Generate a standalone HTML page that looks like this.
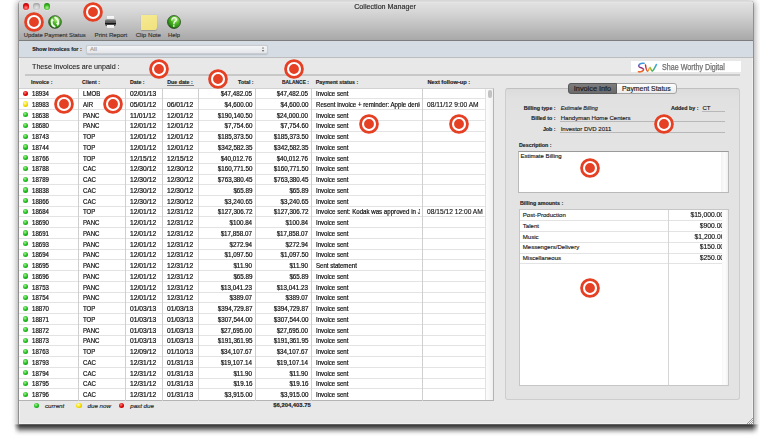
<!DOCTYPE html>
<html><head><meta charset="utf-8"><style>
html,body{margin:0;padding:0;width:760px;height:436px;overflow:hidden;background:#fff;}
body{position:relative;font-family:"Liberation Sans",sans-serif;}
.t{position:absolute;white-space:nowrap;-webkit-text-stroke-width:0.15px;}
.b{position:absolute;box-sizing:border-box;}
</style></head><body>

<div class="b" style="left:14px;top:424px;width:745px;height:12px;background:linear-gradient(rgba(0,0,0,0.45) 0.5px,rgba(0,0,0,0.66) 1.5px,rgba(0,0,0,0.6) 2.5px,rgba(0,0,0,0.52) 3.5px,rgba(0,0,0,0.435) 4.5px,rgba(0,0,0,0.34) 5.5px,rgba(0,0,0,0.247) 6.5px,rgba(0,0,0,0.169) 7.5px,rgba(0,0,0,0.106) 8.5px,rgba(0,0,0,0.059) 9.5px,rgba(0,0,0,0.027) 10.5px,rgba(0,0,0,0.01) 11.5px);-webkit-mask-image:linear-gradient(90deg,transparent 0,#000 6px,#000 738px,transparent 745px);"></div>
<div class="b" style="left:18.50px;top:1.00px;width:734.50px;height:423.00px;background:#e8e8e8;border-radius:3px 3px 0 0;box-shadow:-0.5px 0 0 rgba(0,0,0,0.5), 0.5px 0 0 rgba(0,0,0,0.5), 0 2px 6px 1.5px rgba(0,0,0,0.36), inset 1px 0 0 #f3f3f3, inset 0 -1px 0 #f2f2f2, inset -1px 0 0 #f0f0f0;"></div>
<div class="b" style="left:18.50px;top:1.00px;width:734.50px;height:40.00px;background:linear-gradient(#d9d9d9 0px,#e4e4e4 1.5px,#e0e0e0 2.5px,#d6d6d6 11px,#c0c0c0 25px,#a8a8a8 39px);border-radius:3px 3px 0 0;border-bottom:1px solid #7d7d7d;"></div>
<div class="b" style="left:18.50px;top:41.00px;width:734.50px;height:17.00px;background:#d5dce3;border-bottom:1px solid #bcbcbc;"></div>
<div class="b" style="left:23.00px;top:3.30px;width:6.40px;height:6.40px;border-radius:50%;background:radial-gradient(circle at 50% 68%,#ff9090 0,#e81010 48%,#900000 100%);box-shadow:0 0.5px 0.5px rgba(255,255,255,0.6);"></div>
<div class="b" style="left:33.40px;top:3.30px;width:6.40px;height:6.40px;border-radius:50%;background:radial-gradient(circle at 50% 68%,#e6e6e6 0,#c4c4c4 48%,#808080 100%);box-shadow:0 0.5px 0.5px rgba(255,255,255,0.6);"></div>
<div class="b" style="left:43.60px;top:3.30px;width:6.40px;height:6.40px;border-radius:50%;background:radial-gradient(circle at 50% 68%,#b8f0a0 0,#38b81c 48%,#186a0a 100%);box-shadow:0 0.5px 0.5px rgba(255,255,255,0.6);"></div>
<div class="t" style="left:185.30px;width:400px;text-align:center;top:2.00px;height:10px;line-height:10px;font-size:6.7px;font-weight:normal;font-style:normal;color:#2b2b2b;transform:scaleX(1.07);transform-origin:50% 50%;">Collection Manager</div>
<div class="t" style="left:23.80px;top:29.70px;height:10px;line-height:10px;font-size:5.87px;font-weight:normal;font-style:normal;color:#333;">Update Payment Status</div>
<div class="t" style="left:94.60px;top:29.60px;height:10px;line-height:10px;font-size:6.13px;font-weight:normal;font-style:normal;color:#333;">Print Report</div>
<div class="t" style="left:135.70px;top:29.60px;height:10px;line-height:10px;font-size:6.15px;font-weight:normal;font-style:normal;color:#333;">Clip Note</div>
<div class="t" style="left:168.00px;top:29.60px;height:10px;line-height:10px;font-size:5.8px;font-weight:normal;font-style:normal;color:#333;">Help</div>
<svg style="position:absolute;left:47.85px;top:15.35px" width="14" height="14" viewBox="0 0 14 14">
<defs><radialGradient id="gg" cx="0.62" cy="0.3" r="0.75"><stop offset="0" stop-color="#c4f48a"/><stop offset="0.4" stop-color="#52bc2a"/><stop offset="0.8" stop-color="#2a8c12"/><stop offset="1" stop-color="#185010"/></radialGradient></defs>
<circle cx="7" cy="7" r="6.35" fill="url(#gg)" stroke="#243d1c" stroke-width="0.7"/>
<path d="M6.6 11.6 C4.2 10.6 3.4 8.2 3.9 5.6" stroke="#eef8e8" stroke-width="1.9" fill="none" stroke-linecap="round"/>
<path d="M2.3 6.4 L4.1 3.0 L5.9 6.0 Z" fill="#eef8e8"/>
<path d="M7.2 2.6 C9.6 3.6 10.5 6.0 10.0 8.6" stroke="#eef8e8" stroke-width="1.9" fill="none" stroke-linecap="round"/>
<path d="M8.0 8.0 L9.8 11.2 L11.6 7.8 Z" fill="#eef8e8"/>
</svg>
<div class="b" style="left:107.30px;top:15.80px;width:6.80px;height:4.20px;background:linear-gradient(#fafafa,#e6e6e6);box-shadow:0 0 0.5px rgba(0,0,0,0.5);"></div>
<div class="b" style="left:104.60px;top:19.30px;width:11.80px;height:7.10px;background:linear-gradient(#a8a8a8 0,#6a6a6a 25%,#505050 60%,#3a3a3a 100%);border-radius:2px;"></div>
<div class="b" style="left:105.20px;top:22.90px;width:10.60px;height:1.20px;background:#141414;"></div>
<div class="b" style="left:107.30px;top:25.00px;width:6.80px;height:3.00px;background:linear-gradient(#f8f8f8,#e8e8e8);"></div>
<div class="b" style="left:140.50px;top:14.50px;width:16.10px;height:15.70px;background:linear-gradient(160deg,#f6ea92,#f1e27e);box-shadow:0 0.5px 1px rgba(0,0,0,0.2);border-bottom-right-radius:2px 4px;"></div>
<svg style="position:absolute;left:167.2px;top:14.9px" width="14" height="14" viewBox="0 0 14 14">
<defs><radialGradient id="gh" cx="0.62" cy="0.3" r="0.75"><stop offset="0" stop-color="#c4f48a"/><stop offset="0.4" stop-color="#52bc2a"/><stop offset="0.8" stop-color="#2a8c12"/><stop offset="1" stop-color="#185010"/></radialGradient></defs>
<circle cx="7" cy="7" r="6.5" fill="url(#gh)" stroke="#243d1c" stroke-width="0.7"/>
<path d="M4.9 5.0 C4.9 3.3 6.0 2.7 7.2 2.7 C8.6 2.7 9.5 3.6 9.3 4.8 C9.1 6.0 7.6 6.4 7.1 7.6 L6.9 8.9" stroke="#f0f8ec" stroke-width="1.35" fill="none" stroke-linecap="round"/>
<circle cx="6.8" cy="10.9" r="0.85" fill="#f0f8ec"/>
</svg>
<div class="t" style="left:32.20px;top:44.20px;height:10px;line-height:10px;font-size:5.41px;font-weight:bold;font-style:normal;color:#222;">Show invoices for :</div>
<div class="b" style="left:85.80px;top:44.50px;width:181.80px;height:9.80px;background:linear-gradient(#f4f5f7,#e4e6e9);border:0.8px solid #c9ccd0;border-radius:2px;box-shadow:0 0.5px 1px rgba(0,0,0,0.12);"></div>
<div class="t" style="left:90.10px;top:44.40px;height:10px;line-height:10px;font-size:6px;font-weight:normal;font-style:normal;color:#9a9a9a;">All</div>
<svg style="position:absolute;left:261.2px;top:46px" width="4" height="7" viewBox="0 0 4 7"><path d="M0.8 2.6 L2 0.9 L3.2 2.6 Z M0.8 4.0 L2 5.9 L3.2 4.0 Z" fill="#707070"/></svg>
<div class="t" style="left:31.70px;top:61.90px;height:10px;line-height:10px;font-size:8.1px;font-weight:normal;font-style:normal;color:#1a1a1a;-webkit-text-stroke:0.1px #1a1a1a;transform:scaleX(0.885);transform-origin:0 50%;">These invoices are unpaid :</div>
<div class="b" style="left:25.00px;top:74.00px;width:714.70px;height:2.00px;background:#c8c8c8;"></div>
<div class="b" style="left:630.70px;top:60.60px;width:109.90px;height:11.30px;background:#fff;"></div>
<div class="t" style="left:662.20px;top:61.60px;height:10px;line-height:10px;font-size:8.6px;font-weight:normal;font-style:normal;color:#6e6e6e;transform:scaleX(0.83);transform-origin:0 50%;-webkit-text-stroke:0.25px #6e6e6e;">Shae Worthy Digital</div>
<svg style="position:absolute;left:637px;top:61.5px" width="21" height="11" viewBox="0 0 21 11">
<defs><linearGradient id="gs" x1="0" y1="0" x2="0" y2="1"><stop offset="0" stop-color="#3aa0e0"/><stop offset="0.5" stop-color="#8a2a8a"/><stop offset="1" stop-color="#f07020"/></linearGradient>
<linearGradient id="gw" x1="0" y1="0" x2="1" y2="0"><stop offset="0" stop-color="#d02050"/><stop offset="0.35" stop-color="#f0c020"/><stop offset="0.6" stop-color="#40b040"/><stop offset="1" stop-color="#40a8e0"/></linearGradient></defs>
<path d="M7 1.3 C3 0.8 1 3 2 4.6 C3 6 6 5.5 6.5 7.3 C7 9 4 10 1.5 9.8" stroke="url(#gs)" stroke-width="1.6" fill="none" stroke-linecap="round"/>
<path d="M8.5 3 C9 6 9.5 9 10.5 9.3 C11.5 9.5 12 6 13 5.5 C14 6 14 9.5 15.5 9 C17 8 18.5 4 19.5 2.5" stroke="url(#gw)" stroke-width="1.5" fill="none" stroke-linecap="round"/>
</svg>
<div class="t" style="left:31.00px;top:76.80px;height:10px;line-height:10px;font-size:5.3px;font-weight:bold;font-style:normal;color:#222;">Invoice :</div>
<div class="t" style="left:82.10px;top:76.80px;height:10px;line-height:10px;font-size:5.3px;font-weight:bold;font-style:normal;color:#222;">Client :</div>
<div class="t" style="left:129.90px;top:76.80px;height:10px;line-height:10px;font-size:5.3px;font-weight:bold;font-style:normal;color:#222;">Date :</div>
<div class="t" style="left:167.20px;top:76.80px;height:10px;line-height:10px;font-size:5.3px;font-weight:bold;font-style:normal;color:#222;">Due date :</div>
<div class="b" style="left:167.20px;top:85.00px;width:26.60px;height:0.70px;background:#7a7a7a;"></div>
<div class="t" style="right:506.40px;top:76.80px;height:10px;line-height:10px;font-size:5.3px;font-weight:bold;font-style:normal;color:#222;text-align:right;">Total :</div>
<div class="t" style="right:451.10px;top:77.60px;height:10px;line-height:10px;font-size:4.9px;font-weight:bold;font-style:normal;color:#222;text-align:right;">BALANCE :</div>
<div class="t" style="left:315.80px;top:76.80px;height:10px;line-height:10px;font-size:5.3px;font-weight:bold;font-style:normal;color:#222;">Payment status :</div>
<div class="t" style="left:427.40px;top:76.80px;height:10px;line-height:10px;font-size:5.73px;font-weight:bold;font-style:normal;color:#222;">Next follow-up :</div>
<div class="b" style="left:19.00px;top:88.00px;width:474.50px;height:313.00px;background:#fff;border:1px solid #b4b4b4;border-left:none;border-top:1px solid #d2d2d2;"></div>
<div class="b" style="left:19.00px;top:98.30px;width:466.30px;height:1.00px;background:#e3e3e3;"></div>
<div class="b" style="left:19.00px;top:109.05px;width:466.30px;height:1.00px;background:#e3e3e3;"></div>
<div class="b" style="left:19.00px;top:119.79px;width:466.30px;height:1.00px;background:#e3e3e3;"></div>
<div class="b" style="left:19.00px;top:130.54px;width:466.30px;height:1.00px;background:#e3e3e3;"></div>
<div class="b" style="left:19.00px;top:141.28px;width:466.30px;height:1.00px;background:#e3e3e3;"></div>
<div class="b" style="left:19.00px;top:152.02px;width:466.30px;height:1.00px;background:#e3e3e3;"></div>
<div class="b" style="left:19.00px;top:162.77px;width:466.30px;height:1.00px;background:#e3e3e3;"></div>
<div class="b" style="left:19.00px;top:173.51px;width:466.30px;height:1.00px;background:#e3e3e3;"></div>
<div class="b" style="left:19.00px;top:184.26px;width:466.30px;height:1.00px;background:#e3e3e3;"></div>
<div class="b" style="left:19.00px;top:195.00px;width:466.30px;height:1.00px;background:#e3e3e3;"></div>
<div class="b" style="left:19.00px;top:205.74px;width:466.30px;height:1.00px;background:#e3e3e3;"></div>
<div class="b" style="left:19.00px;top:216.49px;width:466.30px;height:1.00px;background:#e3e3e3;"></div>
<div class="b" style="left:19.00px;top:227.23px;width:466.30px;height:1.00px;background:#e3e3e3;"></div>
<div class="b" style="left:19.00px;top:237.98px;width:466.30px;height:1.00px;background:#e3e3e3;"></div>
<div class="b" style="left:19.00px;top:248.72px;width:466.30px;height:1.00px;background:#e3e3e3;"></div>
<div class="b" style="left:19.00px;top:259.46px;width:466.30px;height:1.00px;background:#e3e3e3;"></div>
<div class="b" style="left:19.00px;top:270.21px;width:466.30px;height:1.00px;background:#e3e3e3;"></div>
<div class="b" style="left:19.00px;top:280.95px;width:466.30px;height:1.00px;background:#e3e3e3;"></div>
<div class="b" style="left:19.00px;top:291.70px;width:466.30px;height:1.00px;background:#e3e3e3;"></div>
<div class="b" style="left:19.00px;top:302.44px;width:466.30px;height:1.00px;background:#e3e3e3;"></div>
<div class="b" style="left:19.00px;top:313.18px;width:466.30px;height:1.00px;background:#e3e3e3;"></div>
<div class="b" style="left:19.00px;top:323.93px;width:466.30px;height:1.00px;background:#e3e3e3;"></div>
<div class="b" style="left:19.00px;top:334.67px;width:466.30px;height:1.00px;background:#e3e3e3;"></div>
<div class="b" style="left:19.00px;top:345.42px;width:466.30px;height:1.00px;background:#e3e3e3;"></div>
<div class="b" style="left:19.00px;top:356.16px;width:466.30px;height:1.00px;background:#e3e3e3;"></div>
<div class="b" style="left:19.00px;top:366.90px;width:466.30px;height:1.00px;background:#e3e3e3;"></div>
<div class="b" style="left:19.00px;top:377.65px;width:466.30px;height:1.00px;background:#e3e3e3;"></div>
<div class="b" style="left:19.00px;top:388.39px;width:466.30px;height:1.00px;background:#e3e3e3;"></div>
<div class="b" style="left:78.00px;top:88.00px;width:1.00px;height:312.50px;background:#cfcfcf;"></div>
<div class="b" style="left:124.80px;top:88.00px;width:1.00px;height:312.50px;background:#cfcfcf;"></div>
<div class="b" style="left:162.00px;top:88.00px;width:1.00px;height:312.50px;background:#cfcfcf;"></div>
<div class="b" style="left:198.10px;top:88.00px;width:1.00px;height:312.50px;background:#cfcfcf;"></div>
<div class="b" style="left:255.00px;top:88.00px;width:1.00px;height:312.50px;background:#cfcfcf;"></div>
<div class="b" style="left:310.70px;top:88.00px;width:1.00px;height:312.50px;background:#cfcfcf;"></div>
<div class="b" style="left:421.90px;top:88.00px;width:1.00px;height:312.50px;background:#cfcfcf;"></div>
<div class="b" style="left:485.30px;top:88.50px;width:7.70px;height:311.50px;background:linear-gradient(90deg,#fbfbfb,#f7f7f7 60%,#efefef);border-left:0.6px solid #e2e2e2;"></div>
<div class="b" style="left:487.90px;top:89.50px;width:3.80px;height:8.30px;background:#c2c2c2;border-radius:2px;"></div>
<div class="b" style="left:22.75px;top:90.71px;width:5.30px;height:5.30px;border-radius:50%;background:radial-gradient(circle at 40% 35%,#ff8080 0,#e00000 50%,#900000 100%);"></div>
<div class="t" style="left:32.00px;top:89.16px;height:10px;line-height:10px;font-size:6.4px;color:#111;-webkit-text-stroke:0.2px #111;transform:scaleX(0.95);transform-origin:0 50%">18934</div>
<div class="t" style="left:82.60px;top:89.16px;height:10px;line-height:10px;font-size:6.4px;color:#111;-webkit-text-stroke:0.2px #111;transform:scaleX(0.95);transform-origin:0 50%">LMOB</div>
<div class="t" style="left:129.90px;top:89.16px;height:10px;line-height:10px;font-size:6.4px;color:#111;-webkit-text-stroke:0.2px #111;transform:scaleX(1.05);transform-origin:0 50%">02/01/13</div>
<div class="t" style="right:507.80px;top:89.16px;height:10px;line-height:10px;font-size:6.4px;color:#111;-webkit-text-stroke:0.2px #111;transform:scaleX(0.98);transform-origin:100% 50%">$47,482.05</div>
<div class="t" style="right:451.80px;top:89.16px;height:10px;line-height:10px;font-size:6.4px;color:#111;-webkit-text-stroke:0.2px #111;transform:scaleX(0.98);transform-origin:100% 50%">$47,482.05</div>
<div class="t" style="left:315.8px;top:89.16px;width:104.6px;overflow:hidden;height:10px;line-height:10px;"><div style="font-size:6.4px;color:#111;transform:scaleX(0.95);-webkit-text-stroke:0.2px #111;transform-origin:0 50%;">Invoice sent</div></div>
<div class="b" style="left:22.75px;top:101.45px;width:5.30px;height:5.30px;border-radius:50%;background:radial-gradient(circle at 40% 35%,#ffffc0 0,#f5e000 50%,#c8a800 100%);"></div>
<div class="t" style="left:32.00px;top:99.90px;height:10px;line-height:10px;font-size:6.4px;color:#111;-webkit-text-stroke:0.2px #111;transform:scaleX(0.95);transform-origin:0 50%">18983</div>
<div class="t" style="left:82.60px;top:99.90px;height:10px;line-height:10px;font-size:6.4px;color:#111;-webkit-text-stroke:0.2px #111;transform:scaleX(0.95);transform-origin:0 50%">AIR</div>
<div class="t" style="left:129.90px;top:99.90px;height:10px;line-height:10px;font-size:6.4px;color:#111;-webkit-text-stroke:0.2px #111;transform:scaleX(1.05);transform-origin:0 50%">05/01/12</div>
<div class="t" style="left:166.90px;top:99.90px;height:10px;line-height:10px;font-size:6.4px;color:#111;-webkit-text-stroke:0.2px #111;transform:scaleX(1.05);transform-origin:0 50%">06/01/12</div>
<div class="t" style="right:507.80px;top:99.90px;height:10px;line-height:10px;font-size:6.4px;color:#111;-webkit-text-stroke:0.2px #111;transform:scaleX(0.98);transform-origin:100% 50%">$4,600.00</div>
<div class="t" style="right:451.80px;top:99.90px;height:10px;line-height:10px;font-size:6.4px;color:#111;-webkit-text-stroke:0.2px #111;transform:scaleX(0.98);transform-origin:100% 50%">$4,600.00</div>
<div class="t" style="left:315.8px;top:99.90px;width:104.6px;overflow:hidden;height:10px;line-height:10px;"><div style="font-size:6.4px;color:#111;transform:scaleX(0.95);-webkit-text-stroke:0.2px #111;transform-origin:0 50%;transform:scaleX(0.96);">Resent invoice + reminder: Apple denied</div></div>
<div class="t" style="left:427.4px;top:99.90px;height:10px;line-height:10px;font-size:6.4px;color:#111;-webkit-text-stroke:0.12px #111;transform:scaleX(1.04);transform-origin:0 50%">08/11/12 9:00 AM</div>
<div class="b" style="left:22.75px;top:112.20px;width:5.30px;height:5.30px;border-radius:50%;background:radial-gradient(circle at 40% 35%,#a8f090 0,#20c020 50%,#0a7a0a 100%);"></div>
<div class="t" style="left:32.00px;top:110.65px;height:10px;line-height:10px;font-size:6.4px;color:#111;-webkit-text-stroke:0.2px #111;transform:scaleX(0.95);transform-origin:0 50%">18638</div>
<div class="t" style="left:82.60px;top:110.65px;height:10px;line-height:10px;font-size:6.4px;color:#111;-webkit-text-stroke:0.2px #111;transform:scaleX(0.95);transform-origin:0 50%">PANC</div>
<div class="t" style="left:129.90px;top:110.65px;height:10px;line-height:10px;font-size:6.4px;color:#111;-webkit-text-stroke:0.2px #111;transform:scaleX(1.05);transform-origin:0 50%">11/01/12</div>
<div class="t" style="left:166.90px;top:110.65px;height:10px;line-height:10px;font-size:6.4px;color:#111;-webkit-text-stroke:0.2px #111;transform:scaleX(1.05);transform-origin:0 50%">12/01/12</div>
<div class="t" style="right:507.80px;top:110.65px;height:10px;line-height:10px;font-size:6.4px;color:#111;-webkit-text-stroke:0.2px #111;transform:scaleX(0.98);transform-origin:100% 50%">$190,140.50</div>
<div class="t" style="right:451.80px;top:110.65px;height:10px;line-height:10px;font-size:6.4px;color:#111;-webkit-text-stroke:0.2px #111;transform:scaleX(0.98);transform-origin:100% 50%">$24,000.00</div>
<div class="t" style="left:315.8px;top:110.65px;width:104.6px;overflow:hidden;height:10px;line-height:10px;"><div style="font-size:6.4px;color:#111;transform:scaleX(0.95);-webkit-text-stroke:0.2px #111;transform-origin:0 50%;">Invoice sent</div></div>
<div class="b" style="left:22.75px;top:122.94px;width:5.30px;height:5.30px;border-radius:50%;background:radial-gradient(circle at 40% 35%,#a8f090 0,#20c020 50%,#0a7a0a 100%);"></div>
<div class="t" style="left:32.00px;top:121.39px;height:10px;line-height:10px;font-size:6.4px;color:#111;-webkit-text-stroke:0.2px #111;transform:scaleX(0.95);transform-origin:0 50%">18680</div>
<div class="t" style="left:82.60px;top:121.39px;height:10px;line-height:10px;font-size:6.4px;color:#111;-webkit-text-stroke:0.2px #111;transform:scaleX(0.95);transform-origin:0 50%">PANC</div>
<div class="t" style="left:129.90px;top:121.39px;height:10px;line-height:10px;font-size:6.4px;color:#111;-webkit-text-stroke:0.2px #111;transform:scaleX(1.05);transform-origin:0 50%">12/01/12</div>
<div class="t" style="left:166.90px;top:121.39px;height:10px;line-height:10px;font-size:6.4px;color:#111;-webkit-text-stroke:0.2px #111;transform:scaleX(1.05);transform-origin:0 50%">12/01/12</div>
<div class="t" style="right:507.80px;top:121.39px;height:10px;line-height:10px;font-size:6.4px;color:#111;-webkit-text-stroke:0.2px #111;transform:scaleX(0.98);transform-origin:100% 50%">$7,754.60</div>
<div class="t" style="right:451.80px;top:121.39px;height:10px;line-height:10px;font-size:6.4px;color:#111;-webkit-text-stroke:0.2px #111;transform:scaleX(0.98);transform-origin:100% 50%">$7,754.60</div>
<div class="t" style="left:315.8px;top:121.39px;width:104.6px;overflow:hidden;height:10px;line-height:10px;"><div style="font-size:6.4px;color:#111;transform:scaleX(0.95);-webkit-text-stroke:0.2px #111;transform-origin:0 50%;">Invoice sent</div></div>
<div class="b" style="left:22.75px;top:133.69px;width:5.30px;height:5.30px;border-radius:50%;background:radial-gradient(circle at 40% 35%,#a8f090 0,#20c020 50%,#0a7a0a 100%);"></div>
<div class="t" style="left:32.00px;top:132.14px;height:10px;line-height:10px;font-size:6.4px;color:#111;-webkit-text-stroke:0.2px #111;transform:scaleX(0.95);transform-origin:0 50%">18743</div>
<div class="t" style="left:82.60px;top:132.14px;height:10px;line-height:10px;font-size:6.4px;color:#111;-webkit-text-stroke:0.2px #111;transform:scaleX(0.95);transform-origin:0 50%">TOP</div>
<div class="t" style="left:129.90px;top:132.14px;height:10px;line-height:10px;font-size:6.4px;color:#111;-webkit-text-stroke:0.2px #111;transform:scaleX(1.05);transform-origin:0 50%">12/01/12</div>
<div class="t" style="left:166.90px;top:132.14px;height:10px;line-height:10px;font-size:6.4px;color:#111;-webkit-text-stroke:0.2px #111;transform:scaleX(1.05);transform-origin:0 50%">12/01/12</div>
<div class="t" style="right:507.80px;top:132.14px;height:10px;line-height:10px;font-size:6.4px;color:#111;-webkit-text-stroke:0.2px #111;transform:scaleX(0.98);transform-origin:100% 50%">$185,373.50</div>
<div class="t" style="right:451.80px;top:132.14px;height:10px;line-height:10px;font-size:6.4px;color:#111;-webkit-text-stroke:0.2px #111;transform:scaleX(0.98);transform-origin:100% 50%">$185,373.50</div>
<div class="t" style="left:315.8px;top:132.14px;width:104.6px;overflow:hidden;height:10px;line-height:10px;"><div style="font-size:6.4px;color:#111;transform:scaleX(0.95);-webkit-text-stroke:0.2px #111;transform-origin:0 50%;">Invoice sent</div></div>
<div class="b" style="left:22.75px;top:144.43px;width:5.30px;height:5.30px;border-radius:50%;background:radial-gradient(circle at 40% 35%,#a8f090 0,#20c020 50%,#0a7a0a 100%);"></div>
<div class="t" style="left:32.00px;top:142.88px;height:10px;line-height:10px;font-size:6.4px;color:#111;-webkit-text-stroke:0.2px #111;transform:scaleX(0.95);transform-origin:0 50%">18744</div>
<div class="t" style="left:82.60px;top:142.88px;height:10px;line-height:10px;font-size:6.4px;color:#111;-webkit-text-stroke:0.2px #111;transform:scaleX(0.95);transform-origin:0 50%">TOP</div>
<div class="t" style="left:129.90px;top:142.88px;height:10px;line-height:10px;font-size:6.4px;color:#111;-webkit-text-stroke:0.2px #111;transform:scaleX(1.05);transform-origin:0 50%">12/01/12</div>
<div class="t" style="left:166.90px;top:142.88px;height:10px;line-height:10px;font-size:6.4px;color:#111;-webkit-text-stroke:0.2px #111;transform:scaleX(1.05);transform-origin:0 50%">12/01/12</div>
<div class="t" style="right:507.80px;top:142.88px;height:10px;line-height:10px;font-size:6.4px;color:#111;-webkit-text-stroke:0.2px #111;transform:scaleX(0.98);transform-origin:100% 50%">$342,582.35</div>
<div class="t" style="right:451.80px;top:142.88px;height:10px;line-height:10px;font-size:6.4px;color:#111;-webkit-text-stroke:0.2px #111;transform:scaleX(0.98);transform-origin:100% 50%">$342,582.35</div>
<div class="t" style="left:315.8px;top:142.88px;width:104.6px;overflow:hidden;height:10px;line-height:10px;"><div style="font-size:6.4px;color:#111;transform:scaleX(0.95);-webkit-text-stroke:0.2px #111;transform-origin:0 50%;">Invoice sent</div></div>
<div class="b" style="left:22.75px;top:155.17px;width:5.30px;height:5.30px;border-radius:50%;background:radial-gradient(circle at 40% 35%,#a8f090 0,#20c020 50%,#0a7a0a 100%);"></div>
<div class="t" style="left:32.00px;top:153.62px;height:10px;line-height:10px;font-size:6.4px;color:#111;-webkit-text-stroke:0.2px #111;transform:scaleX(0.95);transform-origin:0 50%">18766</div>
<div class="t" style="left:82.60px;top:153.62px;height:10px;line-height:10px;font-size:6.4px;color:#111;-webkit-text-stroke:0.2px #111;transform:scaleX(0.95);transform-origin:0 50%">TOP</div>
<div class="t" style="left:129.90px;top:153.62px;height:10px;line-height:10px;font-size:6.4px;color:#111;-webkit-text-stroke:0.2px #111;transform:scaleX(1.05);transform-origin:0 50%">12/15/12</div>
<div class="t" style="left:166.90px;top:153.62px;height:10px;line-height:10px;font-size:6.4px;color:#111;-webkit-text-stroke:0.2px #111;transform:scaleX(1.05);transform-origin:0 50%">12/15/12</div>
<div class="t" style="right:507.80px;top:153.62px;height:10px;line-height:10px;font-size:6.4px;color:#111;-webkit-text-stroke:0.2px #111;transform:scaleX(0.98);transform-origin:100% 50%">$40,012.76</div>
<div class="t" style="right:451.80px;top:153.62px;height:10px;line-height:10px;font-size:6.4px;color:#111;-webkit-text-stroke:0.2px #111;transform:scaleX(0.98);transform-origin:100% 50%">$40,012.76</div>
<div class="t" style="left:315.8px;top:153.62px;width:104.6px;overflow:hidden;height:10px;line-height:10px;"><div style="font-size:6.4px;color:#111;transform:scaleX(0.95);-webkit-text-stroke:0.2px #111;transform-origin:0 50%;">Invoice sent</div></div>
<div class="b" style="left:22.75px;top:165.92px;width:5.30px;height:5.30px;border-radius:50%;background:radial-gradient(circle at 40% 35%,#a8f090 0,#20c020 50%,#0a7a0a 100%);"></div>
<div class="t" style="left:32.00px;top:164.37px;height:10px;line-height:10px;font-size:6.4px;color:#111;-webkit-text-stroke:0.2px #111;transform:scaleX(0.95);transform-origin:0 50%">18788</div>
<div class="t" style="left:82.60px;top:164.37px;height:10px;line-height:10px;font-size:6.4px;color:#111;-webkit-text-stroke:0.2px #111;transform:scaleX(0.95);transform-origin:0 50%">CAC</div>
<div class="t" style="left:129.90px;top:164.37px;height:10px;line-height:10px;font-size:6.4px;color:#111;-webkit-text-stroke:0.2px #111;transform:scaleX(1.05);transform-origin:0 50%">12/30/12</div>
<div class="t" style="left:166.90px;top:164.37px;height:10px;line-height:10px;font-size:6.4px;color:#111;-webkit-text-stroke:0.2px #111;transform:scaleX(1.05);transform-origin:0 50%">12/30/12</div>
<div class="t" style="right:507.80px;top:164.37px;height:10px;line-height:10px;font-size:6.4px;color:#111;-webkit-text-stroke:0.2px #111;transform:scaleX(0.98);transform-origin:100% 50%">$160,771.50</div>
<div class="t" style="right:451.80px;top:164.37px;height:10px;line-height:10px;font-size:6.4px;color:#111;-webkit-text-stroke:0.2px #111;transform:scaleX(0.98);transform-origin:100% 50%">$160,771.50</div>
<div class="t" style="left:315.8px;top:164.37px;width:104.6px;overflow:hidden;height:10px;line-height:10px;"><div style="font-size:6.4px;color:#111;transform:scaleX(0.95);-webkit-text-stroke:0.2px #111;transform-origin:0 50%;">Invoice sent</div></div>
<div class="b" style="left:22.75px;top:176.66px;width:5.30px;height:5.30px;border-radius:50%;background:radial-gradient(circle at 40% 35%,#a8f090 0,#20c020 50%,#0a7a0a 100%);"></div>
<div class="t" style="left:32.00px;top:175.11px;height:10px;line-height:10px;font-size:6.4px;color:#111;-webkit-text-stroke:0.2px #111;transform:scaleX(0.95);transform-origin:0 50%">18789</div>
<div class="t" style="left:82.60px;top:175.11px;height:10px;line-height:10px;font-size:6.4px;color:#111;-webkit-text-stroke:0.2px #111;transform:scaleX(0.95);transform-origin:0 50%">CAC</div>
<div class="t" style="left:129.90px;top:175.11px;height:10px;line-height:10px;font-size:6.4px;color:#111;-webkit-text-stroke:0.2px #111;transform:scaleX(1.05);transform-origin:0 50%">12/30/12</div>
<div class="t" style="left:166.90px;top:175.11px;height:10px;line-height:10px;font-size:6.4px;color:#111;-webkit-text-stroke:0.2px #111;transform:scaleX(1.05);transform-origin:0 50%">12/30/12</div>
<div class="t" style="right:507.80px;top:175.11px;height:10px;line-height:10px;font-size:6.4px;color:#111;-webkit-text-stroke:0.2px #111;transform:scaleX(0.98);transform-origin:100% 50%">$763,380.45</div>
<div class="t" style="right:451.80px;top:175.11px;height:10px;line-height:10px;font-size:6.4px;color:#111;-webkit-text-stroke:0.2px #111;transform:scaleX(0.98);transform-origin:100% 50%">$763,380.45</div>
<div class="t" style="left:315.8px;top:175.11px;width:104.6px;overflow:hidden;height:10px;line-height:10px;"><div style="font-size:6.4px;color:#111;transform:scaleX(0.95);-webkit-text-stroke:0.2px #111;transform-origin:0 50%;">Invoice sent</div></div>
<div class="b" style="left:22.75px;top:187.41px;width:5.30px;height:5.30px;border-radius:50%;background:radial-gradient(circle at 40% 35%,#a8f090 0,#20c020 50%,#0a7a0a 100%);"></div>
<div class="t" style="left:32.00px;top:185.86px;height:10px;line-height:10px;font-size:6.4px;color:#111;-webkit-text-stroke:0.2px #111;transform:scaleX(0.95);transform-origin:0 50%">18838</div>
<div class="t" style="left:82.60px;top:185.86px;height:10px;line-height:10px;font-size:6.4px;color:#111;-webkit-text-stroke:0.2px #111;transform:scaleX(0.95);transform-origin:0 50%">CAC</div>
<div class="t" style="left:129.90px;top:185.86px;height:10px;line-height:10px;font-size:6.4px;color:#111;-webkit-text-stroke:0.2px #111;transform:scaleX(1.05);transform-origin:0 50%">12/30/12</div>
<div class="t" style="left:166.90px;top:185.86px;height:10px;line-height:10px;font-size:6.4px;color:#111;-webkit-text-stroke:0.2px #111;transform:scaleX(1.05);transform-origin:0 50%">12/30/12</div>
<div class="t" style="right:507.80px;top:185.86px;height:10px;line-height:10px;font-size:6.4px;color:#111;-webkit-text-stroke:0.2px #111;transform:scaleX(0.98);transform-origin:100% 50%">$65.89</div>
<div class="t" style="right:451.80px;top:185.86px;height:10px;line-height:10px;font-size:6.4px;color:#111;-webkit-text-stroke:0.2px #111;transform:scaleX(0.98);transform-origin:100% 50%">$65.89</div>
<div class="t" style="left:315.8px;top:185.86px;width:104.6px;overflow:hidden;height:10px;line-height:10px;"><div style="font-size:6.4px;color:#111;transform:scaleX(0.95);-webkit-text-stroke:0.2px #111;transform-origin:0 50%;">Invoice sent</div></div>
<div class="b" style="left:22.75px;top:198.15px;width:5.30px;height:5.30px;border-radius:50%;background:radial-gradient(circle at 40% 35%,#a8f090 0,#20c020 50%,#0a7a0a 100%);"></div>
<div class="t" style="left:32.00px;top:196.60px;height:10px;line-height:10px;font-size:6.4px;color:#111;-webkit-text-stroke:0.2px #111;transform:scaleX(0.95);transform-origin:0 50%">18866</div>
<div class="t" style="left:82.60px;top:196.60px;height:10px;line-height:10px;font-size:6.4px;color:#111;-webkit-text-stroke:0.2px #111;transform:scaleX(0.95);transform-origin:0 50%">CAC</div>
<div class="t" style="left:129.90px;top:196.60px;height:10px;line-height:10px;font-size:6.4px;color:#111;-webkit-text-stroke:0.2px #111;transform:scaleX(1.05);transform-origin:0 50%">12/30/12</div>
<div class="t" style="left:166.90px;top:196.60px;height:10px;line-height:10px;font-size:6.4px;color:#111;-webkit-text-stroke:0.2px #111;transform:scaleX(1.05);transform-origin:0 50%">12/30/12</div>
<div class="t" style="right:507.80px;top:196.60px;height:10px;line-height:10px;font-size:6.4px;color:#111;-webkit-text-stroke:0.2px #111;transform:scaleX(0.98);transform-origin:100% 50%">$3,240.65</div>
<div class="t" style="right:451.80px;top:196.60px;height:10px;line-height:10px;font-size:6.4px;color:#111;-webkit-text-stroke:0.2px #111;transform:scaleX(0.98);transform-origin:100% 50%">$3,240.65</div>
<div class="t" style="left:315.8px;top:196.60px;width:104.6px;overflow:hidden;height:10px;line-height:10px;"><div style="font-size:6.4px;color:#111;transform:scaleX(0.95);-webkit-text-stroke:0.2px #111;transform-origin:0 50%;">Invoice sent</div></div>
<div class="b" style="left:22.75px;top:208.89px;width:5.30px;height:5.30px;border-radius:50%;background:radial-gradient(circle at 40% 35%,#a8f090 0,#20c020 50%,#0a7a0a 100%);"></div>
<div class="t" style="left:32.00px;top:207.34px;height:10px;line-height:10px;font-size:6.4px;color:#111;-webkit-text-stroke:0.2px #111;transform:scaleX(0.95);transform-origin:0 50%">18684</div>
<div class="t" style="left:82.60px;top:207.34px;height:10px;line-height:10px;font-size:6.4px;color:#111;-webkit-text-stroke:0.2px #111;transform:scaleX(0.95);transform-origin:0 50%">TOP</div>
<div class="t" style="left:129.90px;top:207.34px;height:10px;line-height:10px;font-size:6.4px;color:#111;-webkit-text-stroke:0.2px #111;transform:scaleX(1.05);transform-origin:0 50%">12/01/12</div>
<div class="t" style="left:166.90px;top:207.34px;height:10px;line-height:10px;font-size:6.4px;color:#111;-webkit-text-stroke:0.2px #111;transform:scaleX(1.05);transform-origin:0 50%">12/31/12</div>
<div class="t" style="right:507.80px;top:207.34px;height:10px;line-height:10px;font-size:6.4px;color:#111;-webkit-text-stroke:0.2px #111;transform:scaleX(0.98);transform-origin:100% 50%">$127,306.72</div>
<div class="t" style="right:451.80px;top:207.34px;height:10px;line-height:10px;font-size:6.4px;color:#111;-webkit-text-stroke:0.2px #111;transform:scaleX(0.98);transform-origin:100% 50%">$127,306.72</div>
<div class="t" style="left:315.8px;top:207.34px;width:104.6px;overflow:hidden;height:10px;line-height:10px;"><div style="font-size:6.4px;color:#111;transform:scaleX(0.95);-webkit-text-stroke:0.2px #111;transform-origin:0 50%;transform:scaleX(0.96);">Invoice sent: Kodak was approved in July</div></div>
<div class="t" style="left:427.4px;top:207.34px;height:10px;line-height:10px;font-size:6.4px;color:#111;-webkit-text-stroke:0.12px #111;transform:scaleX(1.04);transform-origin:0 50%">08/15/12 12:00 AM</div>
<div class="b" style="left:22.75px;top:219.64px;width:5.30px;height:5.30px;border-radius:50%;background:radial-gradient(circle at 40% 35%,#a8f090 0,#20c020 50%,#0a7a0a 100%);"></div>
<div class="t" style="left:32.00px;top:218.09px;height:10px;line-height:10px;font-size:6.4px;color:#111;-webkit-text-stroke:0.2px #111;transform:scaleX(0.95);transform-origin:0 50%">18690</div>
<div class="t" style="left:82.60px;top:218.09px;height:10px;line-height:10px;font-size:6.4px;color:#111;-webkit-text-stroke:0.2px #111;transform:scaleX(0.95);transform-origin:0 50%">PANC</div>
<div class="t" style="left:129.90px;top:218.09px;height:10px;line-height:10px;font-size:6.4px;color:#111;-webkit-text-stroke:0.2px #111;transform:scaleX(1.05);transform-origin:0 50%">12/01/12</div>
<div class="t" style="left:166.90px;top:218.09px;height:10px;line-height:10px;font-size:6.4px;color:#111;-webkit-text-stroke:0.2px #111;transform:scaleX(1.05);transform-origin:0 50%">12/31/12</div>
<div class="t" style="right:507.80px;top:218.09px;height:10px;line-height:10px;font-size:6.4px;color:#111;-webkit-text-stroke:0.2px #111;transform:scaleX(0.98);transform-origin:100% 50%">$100.84</div>
<div class="t" style="right:451.80px;top:218.09px;height:10px;line-height:10px;font-size:6.4px;color:#111;-webkit-text-stroke:0.2px #111;transform:scaleX(0.98);transform-origin:100% 50%">$100.84</div>
<div class="t" style="left:315.8px;top:218.09px;width:104.6px;overflow:hidden;height:10px;line-height:10px;"><div style="font-size:6.4px;color:#111;transform:scaleX(0.95);-webkit-text-stroke:0.2px #111;transform-origin:0 50%;">Invoice sent</div></div>
<div class="b" style="left:22.75px;top:230.38px;width:5.30px;height:5.30px;border-radius:50%;background:radial-gradient(circle at 40% 35%,#a8f090 0,#20c020 50%,#0a7a0a 100%);"></div>
<div class="t" style="left:32.00px;top:228.83px;height:10px;line-height:10px;font-size:6.4px;color:#111;-webkit-text-stroke:0.2px #111;transform:scaleX(0.95);transform-origin:0 50%">18691</div>
<div class="t" style="left:82.60px;top:228.83px;height:10px;line-height:10px;font-size:6.4px;color:#111;-webkit-text-stroke:0.2px #111;transform:scaleX(0.95);transform-origin:0 50%">PANC</div>
<div class="t" style="left:129.90px;top:228.83px;height:10px;line-height:10px;font-size:6.4px;color:#111;-webkit-text-stroke:0.2px #111;transform:scaleX(1.05);transform-origin:0 50%">12/01/12</div>
<div class="t" style="left:166.90px;top:228.83px;height:10px;line-height:10px;font-size:6.4px;color:#111;-webkit-text-stroke:0.2px #111;transform:scaleX(1.05);transform-origin:0 50%">12/31/12</div>
<div class="t" style="right:507.80px;top:228.83px;height:10px;line-height:10px;font-size:6.4px;color:#111;-webkit-text-stroke:0.2px #111;transform:scaleX(0.98);transform-origin:100% 50%">$17,858.07</div>
<div class="t" style="right:451.80px;top:228.83px;height:10px;line-height:10px;font-size:6.4px;color:#111;-webkit-text-stroke:0.2px #111;transform:scaleX(0.98);transform-origin:100% 50%">$17,858.07</div>
<div class="t" style="left:315.8px;top:228.83px;width:104.6px;overflow:hidden;height:10px;line-height:10px;"><div style="font-size:6.4px;color:#111;transform:scaleX(0.95);-webkit-text-stroke:0.2px #111;transform-origin:0 50%;">Invoice sent</div></div>
<div class="b" style="left:22.75px;top:241.13px;width:5.30px;height:5.30px;border-radius:50%;background:radial-gradient(circle at 40% 35%,#a8f090 0,#20c020 50%,#0a7a0a 100%);"></div>
<div class="t" style="left:32.00px;top:239.58px;height:10px;line-height:10px;font-size:6.4px;color:#111;-webkit-text-stroke:0.2px #111;transform:scaleX(0.95);transform-origin:0 50%">18693</div>
<div class="t" style="left:82.60px;top:239.58px;height:10px;line-height:10px;font-size:6.4px;color:#111;-webkit-text-stroke:0.2px #111;transform:scaleX(0.95);transform-origin:0 50%">PANC</div>
<div class="t" style="left:129.90px;top:239.58px;height:10px;line-height:10px;font-size:6.4px;color:#111;-webkit-text-stroke:0.2px #111;transform:scaleX(1.05);transform-origin:0 50%">12/01/12</div>
<div class="t" style="left:166.90px;top:239.58px;height:10px;line-height:10px;font-size:6.4px;color:#111;-webkit-text-stroke:0.2px #111;transform:scaleX(1.05);transform-origin:0 50%">12/31/12</div>
<div class="t" style="right:507.80px;top:239.58px;height:10px;line-height:10px;font-size:6.4px;color:#111;-webkit-text-stroke:0.2px #111;transform:scaleX(0.98);transform-origin:100% 50%">$272.94</div>
<div class="t" style="right:451.80px;top:239.58px;height:10px;line-height:10px;font-size:6.4px;color:#111;-webkit-text-stroke:0.2px #111;transform:scaleX(0.98);transform-origin:100% 50%">$272.94</div>
<div class="t" style="left:315.8px;top:239.58px;width:104.6px;overflow:hidden;height:10px;line-height:10px;"><div style="font-size:6.4px;color:#111;transform:scaleX(0.95);-webkit-text-stroke:0.2px #111;transform-origin:0 50%;">Invoice sent</div></div>
<div class="b" style="left:22.75px;top:251.87px;width:5.30px;height:5.30px;border-radius:50%;background:radial-gradient(circle at 40% 35%,#a8f090 0,#20c020 50%,#0a7a0a 100%);"></div>
<div class="t" style="left:32.00px;top:250.32px;height:10px;line-height:10px;font-size:6.4px;color:#111;-webkit-text-stroke:0.2px #111;transform:scaleX(0.95);transform-origin:0 50%">18694</div>
<div class="t" style="left:82.60px;top:250.32px;height:10px;line-height:10px;font-size:6.4px;color:#111;-webkit-text-stroke:0.2px #111;transform:scaleX(0.95);transform-origin:0 50%">PANC</div>
<div class="t" style="left:129.90px;top:250.32px;height:10px;line-height:10px;font-size:6.4px;color:#111;-webkit-text-stroke:0.2px #111;transform:scaleX(1.05);transform-origin:0 50%">12/01/12</div>
<div class="t" style="left:166.90px;top:250.32px;height:10px;line-height:10px;font-size:6.4px;color:#111;-webkit-text-stroke:0.2px #111;transform:scaleX(1.05);transform-origin:0 50%">12/31/12</div>
<div class="t" style="right:507.80px;top:250.32px;height:10px;line-height:10px;font-size:6.4px;color:#111;-webkit-text-stroke:0.2px #111;transform:scaleX(0.98);transform-origin:100% 50%">$1,097.50</div>
<div class="t" style="right:451.80px;top:250.32px;height:10px;line-height:10px;font-size:6.4px;color:#111;-webkit-text-stroke:0.2px #111;transform:scaleX(0.98);transform-origin:100% 50%">$1,097.50</div>
<div class="t" style="left:315.8px;top:250.32px;width:104.6px;overflow:hidden;height:10px;line-height:10px;"><div style="font-size:6.4px;color:#111;transform:scaleX(0.95);-webkit-text-stroke:0.2px #111;transform-origin:0 50%;">Invoice sent</div></div>
<div class="b" style="left:22.75px;top:262.61px;width:5.30px;height:5.30px;border-radius:50%;background:radial-gradient(circle at 40% 35%,#a8f090 0,#20c020 50%,#0a7a0a 100%);"></div>
<div class="t" style="left:32.00px;top:261.06px;height:10px;line-height:10px;font-size:6.4px;color:#111;-webkit-text-stroke:0.2px #111;transform:scaleX(0.95);transform-origin:0 50%">18695</div>
<div class="t" style="left:82.60px;top:261.06px;height:10px;line-height:10px;font-size:6.4px;color:#111;-webkit-text-stroke:0.2px #111;transform:scaleX(0.95);transform-origin:0 50%">PANC</div>
<div class="t" style="left:129.90px;top:261.06px;height:10px;line-height:10px;font-size:6.4px;color:#111;-webkit-text-stroke:0.2px #111;transform:scaleX(1.05);transform-origin:0 50%">12/01/12</div>
<div class="t" style="left:166.90px;top:261.06px;height:10px;line-height:10px;font-size:6.4px;color:#111;-webkit-text-stroke:0.2px #111;transform:scaleX(1.05);transform-origin:0 50%">12/31/12</div>
<div class="t" style="right:507.80px;top:261.06px;height:10px;line-height:10px;font-size:6.4px;color:#111;-webkit-text-stroke:0.2px #111;transform:scaleX(0.98);transform-origin:100% 50%">$11.90</div>
<div class="t" style="right:451.80px;top:261.06px;height:10px;line-height:10px;font-size:6.4px;color:#111;-webkit-text-stroke:0.2px #111;transform:scaleX(0.98);transform-origin:100% 50%">$11.90</div>
<div class="t" style="left:315.8px;top:261.06px;width:104.6px;overflow:hidden;height:10px;line-height:10px;"><div style="font-size:6.4px;color:#111;transform:scaleX(0.95);-webkit-text-stroke:0.2px #111;transform-origin:0 50%;">Sent statement</div></div>
<div class="b" style="left:22.75px;top:273.36px;width:5.30px;height:5.30px;border-radius:50%;background:radial-gradient(circle at 40% 35%,#a8f090 0,#20c020 50%,#0a7a0a 100%);"></div>
<div class="t" style="left:32.00px;top:271.81px;height:10px;line-height:10px;font-size:6.4px;color:#111;-webkit-text-stroke:0.2px #111;transform:scaleX(0.95);transform-origin:0 50%">18696</div>
<div class="t" style="left:82.60px;top:271.81px;height:10px;line-height:10px;font-size:6.4px;color:#111;-webkit-text-stroke:0.2px #111;transform:scaleX(0.95);transform-origin:0 50%">PANC</div>
<div class="t" style="left:129.90px;top:271.81px;height:10px;line-height:10px;font-size:6.4px;color:#111;-webkit-text-stroke:0.2px #111;transform:scaleX(1.05);transform-origin:0 50%">12/01/12</div>
<div class="t" style="left:166.90px;top:271.81px;height:10px;line-height:10px;font-size:6.4px;color:#111;-webkit-text-stroke:0.2px #111;transform:scaleX(1.05);transform-origin:0 50%">12/31/12</div>
<div class="t" style="right:507.80px;top:271.81px;height:10px;line-height:10px;font-size:6.4px;color:#111;-webkit-text-stroke:0.2px #111;transform:scaleX(0.98);transform-origin:100% 50%">$65.89</div>
<div class="t" style="right:451.80px;top:271.81px;height:10px;line-height:10px;font-size:6.4px;color:#111;-webkit-text-stroke:0.2px #111;transform:scaleX(0.98);transform-origin:100% 50%">$65.89</div>
<div class="t" style="left:315.8px;top:271.81px;width:104.6px;overflow:hidden;height:10px;line-height:10px;"><div style="font-size:6.4px;color:#111;transform:scaleX(0.95);-webkit-text-stroke:0.2px #111;transform-origin:0 50%;">Invoice sent</div></div>
<div class="b" style="left:22.75px;top:284.10px;width:5.30px;height:5.30px;border-radius:50%;background:radial-gradient(circle at 40% 35%,#a8f090 0,#20c020 50%,#0a7a0a 100%);"></div>
<div class="t" style="left:32.00px;top:282.55px;height:10px;line-height:10px;font-size:6.4px;color:#111;-webkit-text-stroke:0.2px #111;transform:scaleX(0.95);transform-origin:0 50%">18753</div>
<div class="t" style="left:82.60px;top:282.55px;height:10px;line-height:10px;font-size:6.4px;color:#111;-webkit-text-stroke:0.2px #111;transform:scaleX(0.95);transform-origin:0 50%">PANC</div>
<div class="t" style="left:129.90px;top:282.55px;height:10px;line-height:10px;font-size:6.4px;color:#111;-webkit-text-stroke:0.2px #111;transform:scaleX(1.05);transform-origin:0 50%">12/01/12</div>
<div class="t" style="left:166.90px;top:282.55px;height:10px;line-height:10px;font-size:6.4px;color:#111;-webkit-text-stroke:0.2px #111;transform:scaleX(1.05);transform-origin:0 50%">12/31/12</div>
<div class="t" style="right:507.80px;top:282.55px;height:10px;line-height:10px;font-size:6.4px;color:#111;-webkit-text-stroke:0.2px #111;transform:scaleX(0.98);transform-origin:100% 50%">$13,041.23</div>
<div class="t" style="right:451.80px;top:282.55px;height:10px;line-height:10px;font-size:6.4px;color:#111;-webkit-text-stroke:0.2px #111;transform:scaleX(0.98);transform-origin:100% 50%">$13,041.23</div>
<div class="t" style="left:315.8px;top:282.55px;width:104.6px;overflow:hidden;height:10px;line-height:10px;"><div style="font-size:6.4px;color:#111;transform:scaleX(0.95);-webkit-text-stroke:0.2px #111;transform-origin:0 50%;">Invoice sent</div></div>
<div class="b" style="left:22.75px;top:294.85px;width:5.30px;height:5.30px;border-radius:50%;background:radial-gradient(circle at 40% 35%,#a8f090 0,#20c020 50%,#0a7a0a 100%);"></div>
<div class="t" style="left:32.00px;top:293.30px;height:10px;line-height:10px;font-size:6.4px;color:#111;-webkit-text-stroke:0.2px #111;transform:scaleX(0.95);transform-origin:0 50%">18754</div>
<div class="t" style="left:82.60px;top:293.30px;height:10px;line-height:10px;font-size:6.4px;color:#111;-webkit-text-stroke:0.2px #111;transform:scaleX(0.95);transform-origin:0 50%">PANC</div>
<div class="t" style="left:129.90px;top:293.30px;height:10px;line-height:10px;font-size:6.4px;color:#111;-webkit-text-stroke:0.2px #111;transform:scaleX(1.05);transform-origin:0 50%">12/01/12</div>
<div class="t" style="left:166.90px;top:293.30px;height:10px;line-height:10px;font-size:6.4px;color:#111;-webkit-text-stroke:0.2px #111;transform:scaleX(1.05);transform-origin:0 50%">12/31/12</div>
<div class="t" style="right:507.80px;top:293.30px;height:10px;line-height:10px;font-size:6.4px;color:#111;-webkit-text-stroke:0.2px #111;transform:scaleX(0.98);transform-origin:100% 50%">$389.07</div>
<div class="t" style="right:451.80px;top:293.30px;height:10px;line-height:10px;font-size:6.4px;color:#111;-webkit-text-stroke:0.2px #111;transform:scaleX(0.98);transform-origin:100% 50%">$389.07</div>
<div class="t" style="left:315.8px;top:293.30px;width:104.6px;overflow:hidden;height:10px;line-height:10px;"><div style="font-size:6.4px;color:#111;transform:scaleX(0.95);-webkit-text-stroke:0.2px #111;transform-origin:0 50%;">Invoice sent</div></div>
<div class="b" style="left:22.75px;top:305.59px;width:5.30px;height:5.30px;border-radius:50%;background:radial-gradient(circle at 40% 35%,#a8f090 0,#20c020 50%,#0a7a0a 100%);"></div>
<div class="t" style="left:32.00px;top:304.04px;height:10px;line-height:10px;font-size:6.4px;color:#111;-webkit-text-stroke:0.2px #111;transform:scaleX(0.95);transform-origin:0 50%">18870</div>
<div class="t" style="left:82.60px;top:304.04px;height:10px;line-height:10px;font-size:6.4px;color:#111;-webkit-text-stroke:0.2px #111;transform:scaleX(0.95);transform-origin:0 50%">TOP</div>
<div class="t" style="left:129.90px;top:304.04px;height:10px;line-height:10px;font-size:6.4px;color:#111;-webkit-text-stroke:0.2px #111;transform:scaleX(1.05);transform-origin:0 50%">01/03/13</div>
<div class="t" style="left:166.90px;top:304.04px;height:10px;line-height:10px;font-size:6.4px;color:#111;-webkit-text-stroke:0.2px #111;transform:scaleX(1.05);transform-origin:0 50%">01/03/13</div>
<div class="t" style="right:507.80px;top:304.04px;height:10px;line-height:10px;font-size:6.4px;color:#111;-webkit-text-stroke:0.2px #111;transform:scaleX(0.98);transform-origin:100% 50%">$394,729.87</div>
<div class="t" style="right:451.80px;top:304.04px;height:10px;line-height:10px;font-size:6.4px;color:#111;-webkit-text-stroke:0.2px #111;transform:scaleX(0.98);transform-origin:100% 50%">$394,729.87</div>
<div class="t" style="left:315.8px;top:304.04px;width:104.6px;overflow:hidden;height:10px;line-height:10px;"><div style="font-size:6.4px;color:#111;transform:scaleX(0.95);-webkit-text-stroke:0.2px #111;transform-origin:0 50%;">Invoice sent</div></div>
<div class="b" style="left:22.75px;top:316.33px;width:5.30px;height:5.30px;border-radius:50%;background:radial-gradient(circle at 40% 35%,#a8f090 0,#20c020 50%,#0a7a0a 100%);"></div>
<div class="t" style="left:32.00px;top:314.78px;height:10px;line-height:10px;font-size:6.4px;color:#111;-webkit-text-stroke:0.2px #111;transform:scaleX(0.95);transform-origin:0 50%">18871</div>
<div class="t" style="left:82.60px;top:314.78px;height:10px;line-height:10px;font-size:6.4px;color:#111;-webkit-text-stroke:0.2px #111;transform:scaleX(0.95);transform-origin:0 50%">TOP</div>
<div class="t" style="left:129.90px;top:314.78px;height:10px;line-height:10px;font-size:6.4px;color:#111;-webkit-text-stroke:0.2px #111;transform:scaleX(1.05);transform-origin:0 50%">01/03/13</div>
<div class="t" style="left:166.90px;top:314.78px;height:10px;line-height:10px;font-size:6.4px;color:#111;-webkit-text-stroke:0.2px #111;transform:scaleX(1.05);transform-origin:0 50%">01/03/13</div>
<div class="t" style="right:507.80px;top:314.78px;height:10px;line-height:10px;font-size:6.4px;color:#111;-webkit-text-stroke:0.2px #111;transform:scaleX(0.98);transform-origin:100% 50%">$307,544.00</div>
<div class="t" style="right:451.80px;top:314.78px;height:10px;line-height:10px;font-size:6.4px;color:#111;-webkit-text-stroke:0.2px #111;transform:scaleX(0.98);transform-origin:100% 50%">$307,544.00</div>
<div class="t" style="left:315.8px;top:314.78px;width:104.6px;overflow:hidden;height:10px;line-height:10px;"><div style="font-size:6.4px;color:#111;transform:scaleX(0.95);-webkit-text-stroke:0.2px #111;transform-origin:0 50%;">Invoice sent</div></div>
<div class="b" style="left:22.75px;top:327.08px;width:5.30px;height:5.30px;border-radius:50%;background:radial-gradient(circle at 40% 35%,#a8f090 0,#20c020 50%,#0a7a0a 100%);"></div>
<div class="t" style="left:32.00px;top:325.53px;height:10px;line-height:10px;font-size:6.4px;color:#111;-webkit-text-stroke:0.2px #111;transform:scaleX(0.95);transform-origin:0 50%">18872</div>
<div class="t" style="left:82.60px;top:325.53px;height:10px;line-height:10px;font-size:6.4px;color:#111;-webkit-text-stroke:0.2px #111;transform:scaleX(0.95);transform-origin:0 50%">PANC</div>
<div class="t" style="left:129.90px;top:325.53px;height:10px;line-height:10px;font-size:6.4px;color:#111;-webkit-text-stroke:0.2px #111;transform:scaleX(1.05);transform-origin:0 50%">01/03/13</div>
<div class="t" style="left:166.90px;top:325.53px;height:10px;line-height:10px;font-size:6.4px;color:#111;-webkit-text-stroke:0.2px #111;transform:scaleX(1.05);transform-origin:0 50%">01/03/13</div>
<div class="t" style="right:507.80px;top:325.53px;height:10px;line-height:10px;font-size:6.4px;color:#111;-webkit-text-stroke:0.2px #111;transform:scaleX(0.98);transform-origin:100% 50%">$27,695.00</div>
<div class="t" style="right:451.80px;top:325.53px;height:10px;line-height:10px;font-size:6.4px;color:#111;-webkit-text-stroke:0.2px #111;transform:scaleX(0.98);transform-origin:100% 50%">$27,695.00</div>
<div class="t" style="left:315.8px;top:325.53px;width:104.6px;overflow:hidden;height:10px;line-height:10px;"><div style="font-size:6.4px;color:#111;transform:scaleX(0.95);-webkit-text-stroke:0.2px #111;transform-origin:0 50%;">Invoice sent</div></div>
<div class="b" style="left:22.75px;top:337.82px;width:5.30px;height:5.30px;border-radius:50%;background:radial-gradient(circle at 40% 35%,#a8f090 0,#20c020 50%,#0a7a0a 100%);"></div>
<div class="t" style="left:32.00px;top:336.27px;height:10px;line-height:10px;font-size:6.4px;color:#111;-webkit-text-stroke:0.2px #111;transform:scaleX(0.95);transform-origin:0 50%">18873</div>
<div class="t" style="left:82.60px;top:336.27px;height:10px;line-height:10px;font-size:6.4px;color:#111;-webkit-text-stroke:0.2px #111;transform:scaleX(0.95);transform-origin:0 50%">PANC</div>
<div class="t" style="left:129.90px;top:336.27px;height:10px;line-height:10px;font-size:6.4px;color:#111;-webkit-text-stroke:0.2px #111;transform:scaleX(1.05);transform-origin:0 50%">01/03/13</div>
<div class="t" style="left:166.90px;top:336.27px;height:10px;line-height:10px;font-size:6.4px;color:#111;-webkit-text-stroke:0.2px #111;transform:scaleX(1.05);transform-origin:0 50%">01/03/13</div>
<div class="t" style="right:507.80px;top:336.27px;height:10px;line-height:10px;font-size:6.4px;color:#111;-webkit-text-stroke:0.2px #111;transform:scaleX(0.98);transform-origin:100% 50%">$191,361.95</div>
<div class="t" style="right:451.80px;top:336.27px;height:10px;line-height:10px;font-size:6.4px;color:#111;-webkit-text-stroke:0.2px #111;transform:scaleX(0.98);transform-origin:100% 50%">$191,361.95</div>
<div class="t" style="left:315.8px;top:336.27px;width:104.6px;overflow:hidden;height:10px;line-height:10px;"><div style="font-size:6.4px;color:#111;transform:scaleX(0.95);-webkit-text-stroke:0.2px #111;transform-origin:0 50%;">Invoice sent</div></div>
<div class="b" style="left:22.75px;top:348.57px;width:5.30px;height:5.30px;border-radius:50%;background:radial-gradient(circle at 40% 35%,#a8f090 0,#20c020 50%,#0a7a0a 100%);"></div>
<div class="t" style="left:32.00px;top:347.02px;height:10px;line-height:10px;font-size:6.4px;color:#111;-webkit-text-stroke:0.2px #111;transform:scaleX(0.95);transform-origin:0 50%">18763</div>
<div class="t" style="left:82.60px;top:347.02px;height:10px;line-height:10px;font-size:6.4px;color:#111;-webkit-text-stroke:0.2px #111;transform:scaleX(0.95);transform-origin:0 50%">TOP</div>
<div class="t" style="left:129.90px;top:347.02px;height:10px;line-height:10px;font-size:6.4px;color:#111;-webkit-text-stroke:0.2px #111;transform:scaleX(1.05);transform-origin:0 50%">12/09/12</div>
<div class="t" style="left:166.90px;top:347.02px;height:10px;line-height:10px;font-size:6.4px;color:#111;-webkit-text-stroke:0.2px #111;transform:scaleX(1.05);transform-origin:0 50%">01/10/13</div>
<div class="t" style="right:507.80px;top:347.02px;height:10px;line-height:10px;font-size:6.4px;color:#111;-webkit-text-stroke:0.2px #111;transform:scaleX(0.98);transform-origin:100% 50%">$34,107.67</div>
<div class="t" style="right:451.80px;top:347.02px;height:10px;line-height:10px;font-size:6.4px;color:#111;-webkit-text-stroke:0.2px #111;transform:scaleX(0.98);transform-origin:100% 50%">$34,107.67</div>
<div class="t" style="left:315.8px;top:347.02px;width:104.6px;overflow:hidden;height:10px;line-height:10px;"><div style="font-size:6.4px;color:#111;transform:scaleX(0.95);-webkit-text-stroke:0.2px #111;transform-origin:0 50%;">Invoice sent</div></div>
<div class="b" style="left:22.75px;top:359.31px;width:5.30px;height:5.30px;border-radius:50%;background:radial-gradient(circle at 40% 35%,#a8f090 0,#20c020 50%,#0a7a0a 100%);"></div>
<div class="t" style="left:32.00px;top:357.76px;height:10px;line-height:10px;font-size:6.4px;color:#111;-webkit-text-stroke:0.2px #111;transform:scaleX(0.95);transform-origin:0 50%">18793</div>
<div class="t" style="left:82.60px;top:357.76px;height:10px;line-height:10px;font-size:6.4px;color:#111;-webkit-text-stroke:0.2px #111;transform:scaleX(0.95);transform-origin:0 50%">CAC</div>
<div class="t" style="left:129.90px;top:357.76px;height:10px;line-height:10px;font-size:6.4px;color:#111;-webkit-text-stroke:0.2px #111;transform:scaleX(1.05);transform-origin:0 50%">12/31/12</div>
<div class="t" style="left:166.90px;top:357.76px;height:10px;line-height:10px;font-size:6.4px;color:#111;-webkit-text-stroke:0.2px #111;transform:scaleX(1.05);transform-origin:0 50%">01/31/13</div>
<div class="t" style="right:507.80px;top:357.76px;height:10px;line-height:10px;font-size:6.4px;color:#111;-webkit-text-stroke:0.2px #111;transform:scaleX(0.98);transform-origin:100% 50%">$19,107.14</div>
<div class="t" style="right:451.80px;top:357.76px;height:10px;line-height:10px;font-size:6.4px;color:#111;-webkit-text-stroke:0.2px #111;transform:scaleX(0.98);transform-origin:100% 50%">$19,107.14</div>
<div class="t" style="left:315.8px;top:357.76px;width:104.6px;overflow:hidden;height:10px;line-height:10px;"><div style="font-size:6.4px;color:#111;transform:scaleX(0.95);-webkit-text-stroke:0.2px #111;transform-origin:0 50%;">Invoice sent</div></div>
<div class="b" style="left:22.75px;top:370.05px;width:5.30px;height:5.30px;border-radius:50%;background:radial-gradient(circle at 40% 35%,#a8f090 0,#20c020 50%,#0a7a0a 100%);"></div>
<div class="t" style="left:32.00px;top:368.50px;height:10px;line-height:10px;font-size:6.4px;color:#111;-webkit-text-stroke:0.2px #111;transform:scaleX(0.95);transform-origin:0 50%">18794</div>
<div class="t" style="left:82.60px;top:368.50px;height:10px;line-height:10px;font-size:6.4px;color:#111;-webkit-text-stroke:0.2px #111;transform:scaleX(0.95);transform-origin:0 50%">CAC</div>
<div class="t" style="left:129.90px;top:368.50px;height:10px;line-height:10px;font-size:6.4px;color:#111;-webkit-text-stroke:0.2px #111;transform:scaleX(1.05);transform-origin:0 50%">12/31/12</div>
<div class="t" style="left:166.90px;top:368.50px;height:10px;line-height:10px;font-size:6.4px;color:#111;-webkit-text-stroke:0.2px #111;transform:scaleX(1.05);transform-origin:0 50%">01/31/13</div>
<div class="t" style="right:507.80px;top:368.50px;height:10px;line-height:10px;font-size:6.4px;color:#111;-webkit-text-stroke:0.2px #111;transform:scaleX(0.98);transform-origin:100% 50%">$11.90</div>
<div class="t" style="right:451.80px;top:368.50px;height:10px;line-height:10px;font-size:6.4px;color:#111;-webkit-text-stroke:0.2px #111;transform:scaleX(0.98);transform-origin:100% 50%">$11.90</div>
<div class="t" style="left:315.8px;top:368.50px;width:104.6px;overflow:hidden;height:10px;line-height:10px;"><div style="font-size:6.4px;color:#111;transform:scaleX(0.95);-webkit-text-stroke:0.2px #111;transform-origin:0 50%;">Invoice sent</div></div>
<div class="b" style="left:22.75px;top:380.80px;width:5.30px;height:5.30px;border-radius:50%;background:radial-gradient(circle at 40% 35%,#a8f090 0,#20c020 50%,#0a7a0a 100%);"></div>
<div class="t" style="left:32.00px;top:379.25px;height:10px;line-height:10px;font-size:6.4px;color:#111;-webkit-text-stroke:0.2px #111;transform:scaleX(0.95);transform-origin:0 50%">18795</div>
<div class="t" style="left:82.60px;top:379.25px;height:10px;line-height:10px;font-size:6.4px;color:#111;-webkit-text-stroke:0.2px #111;transform:scaleX(0.95);transform-origin:0 50%">CAC</div>
<div class="t" style="left:129.90px;top:379.25px;height:10px;line-height:10px;font-size:6.4px;color:#111;-webkit-text-stroke:0.2px #111;transform:scaleX(1.05);transform-origin:0 50%">12/31/12</div>
<div class="t" style="left:166.90px;top:379.25px;height:10px;line-height:10px;font-size:6.4px;color:#111;-webkit-text-stroke:0.2px #111;transform:scaleX(1.05);transform-origin:0 50%">01/31/13</div>
<div class="t" style="right:507.80px;top:379.25px;height:10px;line-height:10px;font-size:6.4px;color:#111;-webkit-text-stroke:0.2px #111;transform:scaleX(0.98);transform-origin:100% 50%">$19.16</div>
<div class="t" style="right:451.80px;top:379.25px;height:10px;line-height:10px;font-size:6.4px;color:#111;-webkit-text-stroke:0.2px #111;transform:scaleX(0.98);transform-origin:100% 50%">$19.16</div>
<div class="t" style="left:315.8px;top:379.25px;width:104.6px;overflow:hidden;height:10px;line-height:10px;"><div style="font-size:6.4px;color:#111;transform:scaleX(0.95);-webkit-text-stroke:0.2px #111;transform-origin:0 50%;">Invoice sent</div></div>
<div class="b" style="left:22.75px;top:391.54px;width:5.30px;height:5.30px;border-radius:50%;background:radial-gradient(circle at 40% 35%,#a8f090 0,#20c020 50%,#0a7a0a 100%);"></div>
<div class="t" style="left:32.00px;top:389.99px;height:10px;line-height:10px;font-size:6.4px;color:#111;-webkit-text-stroke:0.2px #111;transform:scaleX(0.95);transform-origin:0 50%">18796</div>
<div class="t" style="left:82.60px;top:389.99px;height:10px;line-height:10px;font-size:6.4px;color:#111;-webkit-text-stroke:0.2px #111;transform:scaleX(0.95);transform-origin:0 50%">CAC</div>
<div class="t" style="left:129.90px;top:389.99px;height:10px;line-height:10px;font-size:6.4px;color:#111;-webkit-text-stroke:0.2px #111;transform:scaleX(1.05);transform-origin:0 50%">12/31/12</div>
<div class="t" style="left:166.90px;top:389.99px;height:10px;line-height:10px;font-size:6.4px;color:#111;-webkit-text-stroke:0.2px #111;transform:scaleX(1.05);transform-origin:0 50%">01/31/13</div>
<div class="t" style="right:507.80px;top:389.99px;height:10px;line-height:10px;font-size:6.4px;color:#111;-webkit-text-stroke:0.2px #111;transform:scaleX(0.98);transform-origin:100% 50%">$3,915.00</div>
<div class="t" style="right:451.80px;top:389.99px;height:10px;line-height:10px;font-size:6.4px;color:#111;-webkit-text-stroke:0.2px #111;transform:scaleX(0.98);transform-origin:100% 50%">$3,915.00</div>
<div class="t" style="left:315.8px;top:389.99px;width:104.6px;overflow:hidden;height:10px;line-height:10px;"><div style="font-size:6.4px;color:#111;transform:scaleX(0.95);-webkit-text-stroke:0.2px #111;transform-origin:0 50%;">Invoice sent</div></div>
<div class="b" style="left:33.90px;top:403.30px;width:5.20px;height:5.20px;border-radius:50%;background:radial-gradient(circle at 40% 35%,#a8f090 0,#20c020 50%,#0a7a0a 100%);"></div>
<div class="t" style="left:45.00px;top:400.90px;height:10px;line-height:10px;font-size:6.2px;font-weight:normal;font-style:italic;color:#222;">current</div>
<div class="b" style="left:76.40px;top:403.30px;width:5.20px;height:5.20px;border-radius:50%;background:radial-gradient(circle at 40% 35%,#ffffc0 0,#f5e000 50%,#c8a800 100%);"></div>
<div class="t" style="left:87.50px;top:400.90px;height:10px;line-height:10px;font-size:6.2px;font-weight:normal;font-style:italic;color:#222;">due now</div>
<div class="b" style="left:119.00px;top:403.30px;width:5.20px;height:5.20px;border-radius:50%;background:radial-gradient(circle at 40% 35%,#ff8080 0,#e00000 50%,#900000 100%);"></div>
<div class="t" style="left:130.20px;top:400.90px;height:10px;line-height:10px;font-size:6.2px;font-weight:normal;font-style:italic;color:#222;">past due</div>
<div class="t" style="right:449.20px;top:400.20px;height:10px;line-height:10px;font-size:5.88px;font-weight:bold;font-style:normal;color:#222;text-align:right;">$6,204,403.75</div>
<div class="b" style="left:504.80px;top:88.40px;width:235.00px;height:311.20px;background:linear-gradient(#dcdcdc 0,#e1e1e1 10px,#e3e3e3 40px);border:1px solid #cdcdcd;border-top:1.5px solid #c0c0c0;border-radius:3px;"></div>
<div class="b" style="left:567.60px;top:83.20px;width:109.90px;height:10.40px;background:linear-gradient(#fdfdfd,#ececec);border:1px solid #a4a4a4;border-radius:3px;"></div>
<div class="b" style="left:567.60px;top:83.20px;width:49.40px;height:10.40px;background:linear-gradient(#7d7d7d,#6a6a6a);border:1px solid #5a5a5a;border-radius:3px 0 0 3px;"></div>
<div class="t" style="left:392.50px;width:400px;text-align:center;top:83.60px;height:10px;line-height:10px;font-size:7.3px;font-weight:normal;font-style:normal;color:#1a1a1a;">Invoice Info</div>
<div class="t" style="left:446.30px;width:400px;text-align:center;top:83.60px;height:10px;line-height:10px;font-size:6.9px;font-weight:normal;font-style:normal;color:#1a1a1a;">Payment Status</div>
<div class="t" style="right:204.40px;top:102.50px;height:10px;line-height:10px;font-size:5.33px;font-weight:bold;font-style:normal;color:#222;text-align:right;">Billing type :</div>
<div class="t" style="left:560.70px;top:102.50px;height:10px;line-height:10px;font-size:5.43px;font-weight:normal;font-style:italic;color:#222;">Estimate Billing</div>
<div class="t" style="right:204.40px;top:113.10px;height:10px;line-height:10px;font-size:5.33px;font-weight:bold;font-style:normal;color:#222;text-align:right;">Billed to :</div>
<div class="t" style="left:560.70px;top:113.10px;height:10px;line-height:10px;font-size:6.05px;font-weight:normal;font-style:normal;color:#1a1a1a;">Handyman Home Centers</div>
<div class="b" style="left:560.00px;top:121.30px;width:164.60px;height:1.20px;background:#b8b8b8;"></div>
<div class="t" style="right:204.40px;top:124.20px;height:10px;line-height:10px;font-size:5.33px;font-weight:bold;font-style:normal;color:#222;text-align:right;">Job :</div>
<div class="t" style="left:560.70px;top:124.20px;height:10px;line-height:10px;font-size:6.05px;font-weight:normal;font-style:normal;color:#1a1a1a;">Investor DVD 2011</div>
<div class="b" style="left:560.00px;top:132.10px;width:164.60px;height:1.20px;background:#b8b8b8;"></div>
<div class="t" style="right:61.50px;top:102.50px;height:10px;line-height:10px;font-size:5.33px;font-weight:bold;font-style:normal;color:#222;text-align:right;">Added by :</div>
<div class="t" style="left:702.50px;top:102.50px;height:10px;line-height:10px;font-size:6.05px;font-weight:normal;font-style:normal;color:#1a1a1a;">CT</div>
<div class="b" style="left:702.00px;top:110.90px;width:22.60px;height:1.20px;background:#b8b8b8;"></div>
<div class="t" style="left:519.00px;top:140.40px;height:10px;line-height:10px;font-size:5.33px;font-weight:bold;font-style:normal;color:#222;">Description :</div>
<div class="b" style="left:518.20px;top:150.60px;width:210.80px;height:42.80px;background:#fff;border:1px solid #b9b9b9;border-top:1.5px solid #9a9a9a;"></div>
<div class="b" style="left:720.50px;top:152.10px;width:7.50px;height:40.30px;background:linear-gradient(90deg,#f2f2f2,#fbfbfb,#f0f0f0);"></div>
<div class="t" style="left:520.40px;top:150.60px;height:10px;line-height:10px;font-size:6.05px;font-weight:normal;font-style:normal;color:#1a1a1a;">Estimate Billing</div>
<div class="t" style="left:520.00px;top:198.00px;height:10px;line-height:10px;font-size:5.33px;font-weight:bold;font-style:normal;color:#222;">Billing amounts :</div>
<div class="b" style="left:518.80px;top:209.30px;width:210.60px;height:177.00px;background:#fff;border:1px solid #c6c6c6;"></div>
<div class="b" style="left:519.80px;top:220.34px;width:201.80px;height:1.00px;background:#e3e3e3;"></div>
<div class="b" style="left:519.80px;top:231.09px;width:201.80px;height:1.00px;background:#e3e3e3;"></div>
<div class="b" style="left:519.80px;top:241.83px;width:201.80px;height:1.00px;background:#e3e3e3;"></div>
<div class="b" style="left:519.80px;top:252.58px;width:201.80px;height:1.00px;background:#e3e3e3;"></div>
<div class="b" style="left:519.80px;top:263.32px;width:201.80px;height:1.00px;background:#e3e3e3;"></div>
<div class="b" style="left:668.30px;top:210.30px;width:1.00px;height:175.00px;background:#d6d6d6;"></div>
<div class="b" style="left:721.60px;top:210.30px;width:6.80px;height:175.00px;background:linear-gradient(90deg,#f8f8f8,#fdfdfd,#f0f0f0);"></div>
<div class="b" style="left:669.3px;top:210.3px;width:52.3px;height:80px;overflow:hidden">
<div class="t" style="right:-2.6px;top:-0.20px;height:10px;line-height:10px;font-size:6.4px;color:#111;transform:scaleX(1.05);transform-origin:100% 50%">$15,000.00</div>
<div class="t" style="right:-2.6px;top:10.54px;height:10px;line-height:10px;font-size:6.4px;color:#111;transform:scaleX(1.05);transform-origin:100% 50%">$900.00</div>
<div class="t" style="right:-2.6px;top:21.29px;height:10px;line-height:10px;font-size:6.4px;color:#111;transform:scaleX(1.05);transform-origin:100% 50%">$1,200.00</div>
<div class="t" style="right:-2.6px;top:32.03px;height:10px;line-height:10px;font-size:6.4px;color:#111;transform:scaleX(1.05);transform-origin:100% 50%">$150.00</div>
<div class="t" style="right:-2.6px;top:42.78px;height:10px;line-height:10px;font-size:6.4px;color:#111;transform:scaleX(1.05);transform-origin:100% 50%">$250.00</div>
</div>
<div class="t" style="left:522.80px;top:210.10px;height:10px;line-height:10px;font-size:6.05px;font-weight:normal;font-style:normal;color:#1a1a1a;">Post-Production</div>
<div class="t" style="left:522.80px;top:220.84px;height:10px;line-height:10px;font-size:6.05px;font-weight:normal;font-style:normal;color:#1a1a1a;">Talent</div>
<div class="t" style="left:522.80px;top:231.59px;height:10px;line-height:10px;font-size:6.05px;font-weight:normal;font-style:normal;color:#1a1a1a;">Music</div>
<div class="t" style="left:522.80px;top:242.33px;height:10px;line-height:10px;font-size:6.05px;font-weight:normal;font-style:normal;color:#1a1a1a;">Messengers/Delivery</div>
<div class="t" style="left:522.80px;top:253.08px;height:10px;line-height:10px;font-size:6.05px;font-weight:normal;font-style:normal;color:#1a1a1a;">Miscellaneous</div>
<svg style="position:absolute;left:747px;top:417.5px" width="6" height="6" viewBox="0 0 6 6"><rect x="0" y="5" width="1" height="1" fill="#9a9a9a"/><rect x="1" y="4" width="1" height="1" fill="#9a9a9a"/><rect x="1" y="5" width="1" height="1" fill="#f4f4f4"/><rect x="2" y="3" width="1" height="1" fill="#9a9a9a"/><rect x="2" y="4" width="1" height="1" fill="#f4f4f4"/><rect x="2" y="5" width="1" height="1" fill="#9a9a9a"/><rect x="3" y="2" width="1" height="1" fill="#9a9a9a"/><rect x="3" y="3" width="1" height="1" fill="#f4f4f4"/><rect x="3" y="4" width="1" height="1" fill="#9a9a9a"/><rect x="3" y="5" width="1" height="1" fill="#f4f4f4"/><rect x="4" y="1" width="1" height="1" fill="#9a9a9a"/><rect x="4" y="2" width="1" height="1" fill="#f4f4f4"/><rect x="4" y="3" width="1" height="1" fill="#9a9a9a"/><rect x="4" y="4" width="1" height="1" fill="#f4f4f4"/><rect x="4" y="5" width="1" height="1" fill="#9a9a9a"/><rect x="5" y="0" width="1" height="1" fill="#9a9a9a"/><rect x="5" y="1" width="1" height="1" fill="#f4f4f4"/><rect x="5" y="2" width="1" height="1" fill="#9a9a9a"/><rect x="5" y="3" width="1" height="1" fill="#f4f4f4"/><rect x="5" y="4" width="1" height="1" fill="#9a9a9a"/><rect x="5" y="5" width="1" height="1" fill="#f4f4f4"/></svg>
<svg style="position:absolute;left:24.00px;top:12.10px" width="20" height="20" viewBox="0 0 20 20"><circle cx="10" cy="10" r="8.45" fill="#e53f24" stroke="#e53f24" stroke-width="2.8"/><circle cx="10" cy="10" r="6" fill="none" stroke="#fff" stroke-width="2.1"/></svg>
<svg style="position:absolute;left:83.00px;top:1.80px" width="20" height="20" viewBox="0 0 20 20"><circle cx="10" cy="10" r="8.45" fill="#e53f24" stroke="#e53f24" stroke-width="2.8"/><circle cx="10" cy="10" r="6" fill="none" stroke="#fff" stroke-width="2.1"/></svg>
<svg style="position:absolute;left:149.00px;top:59.00px" width="20" height="20" viewBox="0 0 20 20"><circle cx="10" cy="10" r="8.45" fill="#e53f24" stroke="#e53f24" stroke-width="2.8"/><circle cx="10" cy="10" r="6" fill="none" stroke="#fff" stroke-width="2.1"/></svg>
<svg style="position:absolute;left:207.90px;top:69.00px" width="20" height="20" viewBox="0 0 20 20"><circle cx="10" cy="10" r="8.45" fill="#e53f24" stroke="#e53f24" stroke-width="2.8"/><circle cx="10" cy="10" r="6" fill="none" stroke="#fff" stroke-width="2.1"/></svg>
<svg style="position:absolute;left:283.80px;top:58.70px" width="20" height="20" viewBox="0 0 20 20"><circle cx="10" cy="10" r="8.45" fill="#e53f24" stroke="#e53f24" stroke-width="2.8"/><circle cx="10" cy="10" r="6" fill="none" stroke="#fff" stroke-width="2.1"/></svg>
<svg style="position:absolute;left:54.10px;top:93.80px" width="20" height="20" viewBox="0 0 20 20"><circle cx="10" cy="10" r="8.45" fill="#e53f24" stroke="#e53f24" stroke-width="2.8"/><circle cx="10" cy="10" r="6" fill="none" stroke="#fff" stroke-width="2.1"/></svg>
<svg style="position:absolute;left:103.00px;top:93.80px" width="20" height="20" viewBox="0 0 20 20"><circle cx="10" cy="10" r="8.45" fill="#e53f24" stroke="#e53f24" stroke-width="2.8"/><circle cx="10" cy="10" r="6" fill="none" stroke="#fff" stroke-width="2.1"/></svg>
<svg style="position:absolute;left:359.00px;top:113.80px" width="20" height="20" viewBox="0 0 20 20"><circle cx="10" cy="10" r="8.45" fill="#e53f24" stroke="#e53f24" stroke-width="2.8"/><circle cx="10" cy="10" r="6" fill="none" stroke="#fff" stroke-width="2.1"/></svg>
<svg style="position:absolute;left:448.90px;top:113.80px" width="20" height="20" viewBox="0 0 20 20"><circle cx="10" cy="10" r="8.45" fill="#e53f24" stroke="#e53f24" stroke-width="2.8"/><circle cx="10" cy="10" r="6" fill="none" stroke="#fff" stroke-width="2.1"/></svg>
<svg style="position:absolute;left:654.00px;top:114.00px" width="20" height="20" viewBox="0 0 20 20"><circle cx="10" cy="10" r="8.45" fill="#e53f24" stroke="#e53f24" stroke-width="2.8"/><circle cx="10" cy="10" r="6" fill="none" stroke="#fff" stroke-width="2.1"/></svg>
<svg style="position:absolute;left:579.90px;top:157.90px" width="20" height="20" viewBox="0 0 20 20"><circle cx="10" cy="10" r="8.45" fill="#e53f24" stroke="#e53f24" stroke-width="2.8"/><circle cx="10" cy="10" r="6" fill="none" stroke="#fff" stroke-width="2.1"/></svg>
<svg style="position:absolute;left:580.00px;top:277.90px" width="20" height="20" viewBox="0 0 20 20"><circle cx="10" cy="10" r="8.45" fill="#e53f24" stroke="#e53f24" stroke-width="2.8"/><circle cx="10" cy="10" r="6" fill="none" stroke="#fff" stroke-width="2.1"/></svg>
</body></html>
